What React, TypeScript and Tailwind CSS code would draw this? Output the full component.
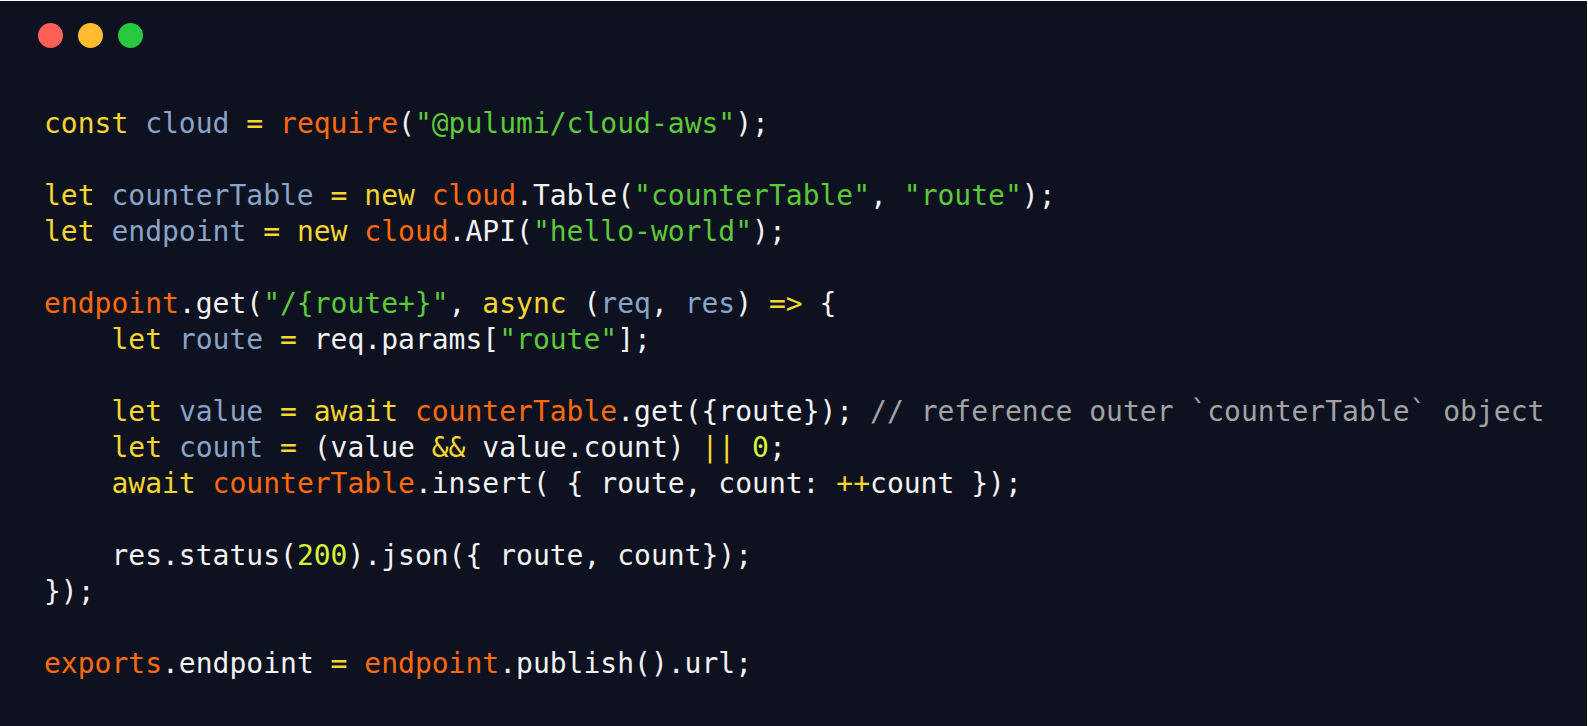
import React from 'react';

type Tok = [string, string];

const K = 'text-[#f5d631]'; // keyword
const V = 'text-[#8aa4c8]'; // variable
const O = 'text-[#ff6a0d]'; // object
const S = 'text-[#5cc93a]'; // string
const N = 'text-[#d8f23a]'; // number
const W = 'text-[#f2f2f2]'; // plain
const C = 'text-[#a3a3a3]'; // comment

const lines: Tok[][] = [
  [[K, 'const'], [W, ' '], [V, 'cloud'], [W, ' '], [K, '='], [W, ' '], [O, 'require'], [W, '('], [S, '"@pulumi/cloud-aws"'], [W, ');']],
  [],
  [[K, 'let'], [W, ' '], [V, 'counterTable'], [W, ' '], [K, '='], [W, ' '], [K, 'new'], [W, ' '], [O, 'cloud'], [W, '.Table('], [S, '"counterTable"'], [W, ', '], [S, '"route"'], [W, ');']],
  [[K, 'let'], [W, ' '], [V, 'endpoint'], [W, ' '], [K, '='], [W, ' '], [K, 'new'], [W, ' '], [O, 'cloud'], [W, '.API('], [S, '"hello-world"'], [W, ');']],
  [],
  [[O, 'endpoint'], [W, '.get('], [S, '"/{route+}"'], [W, ', '], [K, 'async'], [W, ' ('], [V, 'req'], [W, ', '], [V, 'res'], [W, ') '], [K, '=>'], [W, ' {']],
  [[W, '    '], [K, 'let'], [W, ' '], [V, 'route'], [W, ' '], [K, '='], [W, ' req.params['], [S, '"route"'], [W, '];']],
  [],
  [[W, '    '], [K, 'let'], [W, ' '], [V, 'value'], [W, ' '], [K, '='], [W, ' '], [K, 'await'], [W, ' '], [O, 'counterTable'], [W, '.get({route}); '], [C, '// reference outer `counterTable` object']],
  [[W, '    '], [K, 'let'], [W, ' '], [V, 'count'], [W, ' '], [K, '='], [W, ' (value '], [K, '&&'], [W, ' value.count) '], [K, '||'], [W, ' '], [N, '0'], [W, ';']],
  [[W, '    '], [K, 'await'], [W, ' '], [O, 'counterTable'], [W, '.insert( { route, count: '], [K, '++'], [W, 'count });']],
  [],
  [[W, '    res.status('], [N, '200'], [W, ').json({ route, count});']],
  [[W, '});']],
  [],
  [[O, 'exports'], [W, '.endpoint '], [K, '='], [W, ' '], [O, 'endpoint'], [W, '.publish().url;']],
];

export default function App() {
  return (
    <div className="w-[1588px] h-[726px] bg-white pt-px pr-px">
      <div className="h-full bg-[#0d1120] px-[44px] pt-[22px]">
        <div className="flex gap-[15px] -ml-[6px]">
          <span className="w-[25px] h-[25px] rounded-full bg-[#ff5f57]" />
          <span className="w-[25px] h-[25px] rounded-full bg-[#febc2e]" />
          <span className="w-[25px] h-[25px] rounded-full bg-[#28c840]" />
        </div>
        <pre className="mt-[58px] text-[28px] leading-[36px] font-['DejaVu_Sans_Mono',monospace] whitespace-pre">
          {lines.map((ln, i) => (
            <div key={i} className="h-[36px]">
              {ln.map(([cls, t], j) => (
                <span key={j} className={cls}>{t}</span>
              ))}
            </div>
          ))}
        </pre>
      </div>
    </div>
  );
}
